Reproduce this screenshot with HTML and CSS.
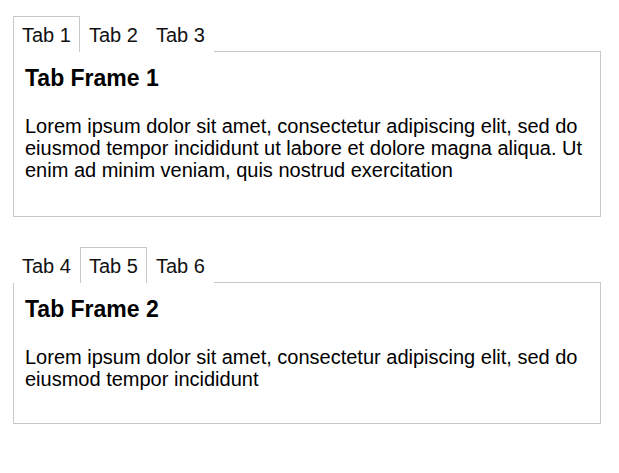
FILE: index.html
```html
<!DOCTYPE html>
<html lang="en">
<head>
    <meta charset="UTF-8">
    <title>Tabs</title>
    <link rel="stylesheet" href="styles.css">
</head>
<body>
    <!-- First tab group -->
    <div class="tabs">
        <div class="tab-bar">
            <div class="tab active">Tab 1</div>
            <div class="tab">Tab 2</div>
            <div class="tab">Tab 3</div>
        </div>
        <div class="tab-frame frame-1">
            <h2>Tab Frame 1</h2>
            <p>Lorem ipsum dolor sit amet, consectetur adipiscing elit, sed do eiusmod tempor incididunt ut labore et dolore magna aliqua. Ut enim ad minim veniam, quis nostrud exercitation</p>
        </div>
    </div>

    <!-- Second tab group -->
    <div class="tabs">
        <div class="tab-bar">
            <div class="tab">Tab 4</div>
            <div class="tab active">Tab 5</div>
            <div class="tab">Tab 6</div>
        </div>
        <div class="tab-frame frame-2">
            <h2>Tab Frame 2</h2>
            <p>Lorem ipsum dolor sit amet, consectetur adipiscing elit, sed do eiusmod tempor incididunt</p>
        </div>
    </div>
</body>
</html>
```

FILE: styles.css
```css
* {
    margin: 0;
    padding: 0;
    box-sizing: border-box;
}

body {
    background: #fff;
    color: #000;
    font-family: 'Liberation Sans', Arial, sans-serif;
    font-size: 20px;
    padding: 16px 18px 0 13px;
}

.tabs {
    margin-bottom: 30px;
}

.tab-bar {
    display: flex;
}

.tab {
    height: 36px;
    padding: 6px 8px 0;
    border: 1px solid transparent;
    border-bottom: none;
    line-height: 24px;
    color: #111;
    position: relative;
    margin-bottom: -1px;
    background: #fff;
}

.tab.active {
    border-color: #c8c8c8;
}

.tab-frame {
    border: 1px solid #c8c8c8;
    padding: 13px 11px;
}

.frame-1 { height: 166px; }
.frame-2 { height: 142px; }

.tab-frame h2 {
    font-size: 23px;
    font-weight: bold;
    line-height: 26px;
    margin-bottom: 24px;
}

.tab-frame p {
    line-height: 22px;
}
```
